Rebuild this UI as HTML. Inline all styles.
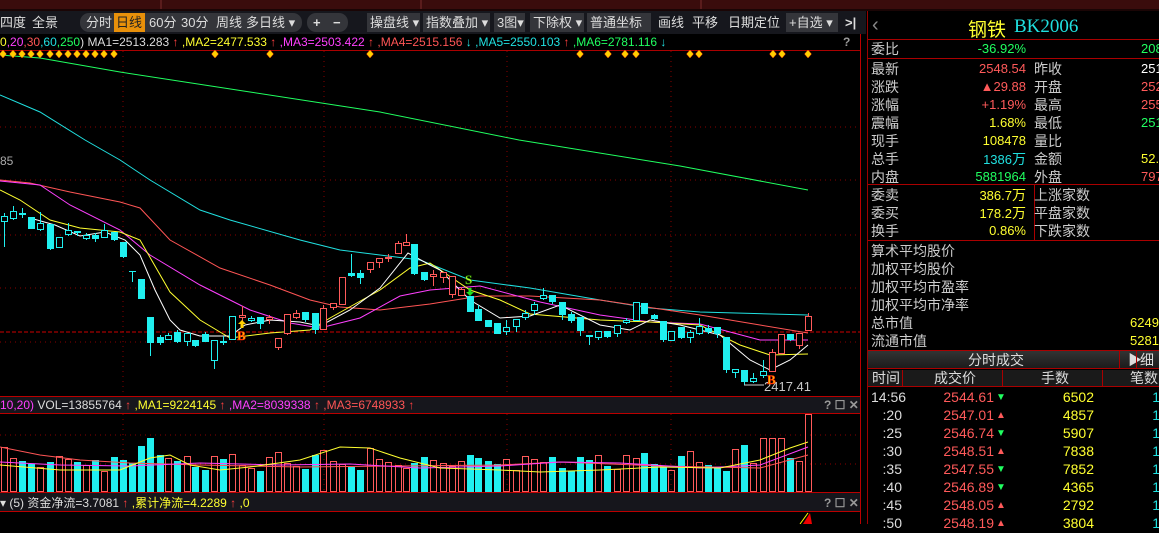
<!DOCTYPE html>
<html><head><meta charset="utf-8">
<style>
*{margin:0;padding:0;box-sizing:border-box}
body{width:1159px;height:524px;background:#000;overflow:hidden;position:relative;font-family:"Liberation Sans","Noto Sans CJK SC",sans-serif;color:#ccc}
.a{position:absolute;white-space:nowrap}
#tb{position:absolute;left:0;top:11px;width:866px;height:23px;background:#16171d;font-size:13px;color:#ddd}
.pill{position:absolute;top:2px;height:19px;background:#34353a;border-radius:9px}
.btn{position:absolute;top:2px;height:19px;background:#34353a;line-height:19px;padding-left:3px;font-size:13px;color:#ddd}
.t{position:absolute;top:2px;line-height:19px;font-size:13px;color:#ddd}
#rp{position:absolute;left:867px;top:11px;width:292px;height:513px;background:#000;border-left:1px solid #900}
.r{position:absolute;font-size:14px;line-height:18px}
.v{position:absolute;font-size:13px;line-height:18px;text-align:right}
</style></head><body>
<div class="a" style="left:0;top:0;width:1159px;height:10px;background:#3a0c0c"></div>
<div class="a" style="left:0;top:9px;width:1159px;height:2px;background:#1a0505"></div>
<div class="a" style="left:160px;top:0;width:2px;height:9px;background:#5a1c1c"></div>
<div class="a" style="left:420px;top:0;width:2px;height:9px;background:#5a1c1c"></div>
<div class="a" style="left:700px;top:0;width:2px;height:9px;background:#5a1c1c"></div>

<div id="tb">
<span class="t" style="left:0">四度</span><span class="t" style="left:32px">全景</span>
<div class="pill" style="left:80px;width:222px"></div>
<span class="t" style="left:86px">分时</span>
<span class="t" style="left:114px;top:2px;height:19px;width:31px;background:#e8900a;color:#222;padding-left:2px">日线</span>
<span class="t" style="left:149px">60分</span><span class="t" style="left:181px">30分</span><span class="t" style="left:216px">周线</span><span class="t" style="left:246px">多日线 ▾</span>
<div class="pill" style="left:307px;width:41px"></div>
<span class="t" style="left:313px;font-weight:bold">+</span><span class="t" style="left:333px;font-weight:bold">−</span>
<span class="btn" style="left:367px;width:53px">操盘线 ▾</span>
<span class="btn" style="left:423px;width:67px">指数叠加 ▾</span>
<span class="btn" style="left:494px;width:31px">3图▾</span>
<span class="btn" style="left:530px;width:54px">下除权 ▾</span>
<span class="btn" style="left:587px;width:64px">普通坐标 ▾</span>
<span class="t" style="left:658px">画线</span><span class="t" style="left:692px">平移</span><span class="t" style="left:728px">日期定位</span>
<span class="btn" style="left:786px;width:52px">+自选 ▾</span>
<span class="t" style="left:845px;font-weight:bold">&gt;|</span>
</div>

<svg class="a" style="left:0;top:0" width="866" height="524" id="sv">
<rect x="0" y="34" width="860" height="16" fill="#000"/>
<line x1="0" y1="50.5" x2="860" y2="50.5" stroke="#a00" />
<line x1="860.5" y1="34" x2="860.5" y2="524" stroke="#b00"/>
<g stroke="#8a0000" stroke-dasharray="1,4">
<line x1="0" y1="127" x2="860" y2="127"/><line x1="0" y1="180" x2="860" y2="180"/><line x1="0" y1="235" x2="860" y2="235"/><line x1="0" y1="288" x2="860" y2="288"/><line x1="0" y1="342" x2="860" y2="342"/>
<line x1="123" y1="51" x2="123" y2="396"/><line x1="324" y1="51" x2="324" y2="396"/><line x1="507" y1="51" x2="507" y2="396"/><line x1="671" y1="51" x2="671" y2="396"/>
<line x1="0" y1="435" x2="860" y2="435"/><line x1="0" y1="464" x2="860" y2="464"/>
<line x1="123" y1="414" x2="123" y2="492"/><line x1="324" y1="414" x2="324" y2="492"/><line x1="507" y1="414" x2="507" y2="492"/><line x1="671" y1="414" x2="671" y2="492"/>
</g>
<line x1="0" y1="332" x2="860" y2="332" stroke="#c00" stroke-dasharray="4,2"/>
<text x="0" y="165" fill="#aaa" font-size="12" font-family="Liberation Sans">85</text>
<g fill="none" stroke-width="1">
<polyline stroke="#20ff60" points="0,55 40,58 120,72 250,92 380,112 519,140 680,166 808,190"/>
<polyline stroke="#20e0e0" points="0,95 40,112 85,140 120,160 150,180 200,210 230,220 300,240 340,250 420,260 470,280 530,288 600,300 650,308 700,312 808,315"/>
<polyline stroke="#ff5555" points="0,180 30,183 70,192 120,202 140,208 170,240 220,268 270,285 310,300 340,307 380,310 430,304 480,296 530,296 600,300 640,306 700,315 760,325 808,333"/>
<polyline stroke="#ff40ff" points="0,181 40,185 70,205 120,230 150,255 200,285 250,310 290,323 320,328 360,318 400,296 430,290 480,286 540,302 600,315 650,322 700,324 730,332 760,340 808,340"/>
<polyline stroke="#ffff30" points="0,190 20,200 50,220 80,228 120,232 140,240 170,292 200,320 230,338 270,333 310,330 330,318 380,290 410,268 430,263 470,290 500,300 530,314 600,320 650,322 700,325 740,345 770,355 808,354"/>
<polyline stroke="#ffffff" points="30,218 55,225 80,236 105,232 125,240 140,255 155,290 170,320 180,330 200,336 230,336 245,325 270,320 300,322 320,326 350,310 380,288 408,253 430,265 440,270 470,300 500,318 530,316 560,305 600,325 630,330 650,320 680,325 720,335 750,360 770,370 790,360 808,345"/>
</g>
<g id="cd"></g>
<g id="vb"></g>
<polyline fill="none" stroke="#ff5555" points="0,447 40,455 80,460 130,463 200,465 300,467 400,466 500,465 560,462 660,466 760,468 808,455"/>
<polyline fill="none" stroke="#ff40ff" points="0,462 60,465 130,466 200,463 280,465 350,464 420,468 500,466 560,462 620,463 700,468 760,465 800,450 808,447"/>
<polyline fill="none" stroke="#ffff30" points="0,465 60,470 120,470 150,458 170,455 190,465 220,470 250,467 300,460 340,447 370,448 400,458 440,468 500,470 540,472 600,470 660,467 720,468 760,460 790,448 808,442"/>
<line x1="744" y1="385" x2="764" y2="385" stroke="#ccc"/>
<text x="764" y="391" fill="#c8c8c8" font-size="13" font-family="Liberation Sans">2417.41</text>
<text x="237" y="340" fill="#ffb000" stroke="#ff2000" stroke-width="0.6" font-size="13" font-weight="bold" font-family="Liberation Serif">B</text>
<text x="767" y="384" fill="#ffb000" stroke="#ff2000" stroke-width="0.6" font-size="13" font-weight="bold" font-family="Liberation Serif">B</text>
<text x="465" y="284" fill="#c0ff30" stroke="#208000" stroke-width="0.5" font-size="13" font-weight="bold" font-family="Liberation Serif">S</text>
<path d="M242 320 l-4 4 h2.5 v4 h3 v-4 h2.5z" fill="#ffd000"/>
<path d="M470 296 l-4 -4 h2.5 v-4 h3 v4 h2.5z" fill="#20e020"/>
<g id="dm" fill="#ffd000" stroke="#ff4000" stroke-width="0.5"></g>
<rect x="0" y="397" width="860" height="16" fill="#16161c"/>
<line x1="0" y1="396.5" x2="860" y2="396.5" stroke="#b00"/>
<line x1="0" y1="413.5" x2="860" y2="413.5" stroke="#b00"/>
<rect x="0" y="493" width="860" height="18" fill="#16161c"/>
<line x1="0" y1="492.5" x2="860" y2="492.5" stroke="#b00"/>
<line x1="0" y1="511.5" x2="860" y2="511.5" stroke="#b00"/>
<polygon points="803,524 810,513 812,524" fill="#e00"/><line x1="800" y1="524" x2="808" y2="513" stroke="#ff0"/>
<g font-family="Liberation Sans" font-size="12">
<text x="0" y="46"><tspan fill="#ffff30">0</tspan><tspan fill="#ff40ff">,20</tspan><tspan fill="#ff5555">,30</tspan><tspan fill="#20e0e0">,60</tspan><tspan fill="#20ff60">,250</tspan><tspan fill="#ddd">)  MA1=2513.283 </tspan><tspan fill="#ff4040">↑ </tspan><tspan fill="#ffff30">,MA2=2477.533 </tspan><tspan fill="#ff4040">↑ </tspan><tspan fill="#ff40ff">,MA3=2503.422 </tspan><tspan fill="#ff4040">↑ </tspan><tspan fill="#ff5555">,MA4=2515.156 </tspan><tspan fill="#20e0e0">↓ </tspan><tspan fill="#20e0e0">,MA5=2550.103 </tspan><tspan fill="#ff4040">↑ </tspan><tspan fill="#20ff60">,MA6=2781.116 </tspan><tspan fill="#20e0e0">↓</tspan></text>
<text x="0" y="409"><tspan fill="#ff40ff">10,20)</tspan><tspan fill="#ddd">  VOL=13855764 </tspan><tspan fill="#ff4040">↑ </tspan><tspan fill="#ffff30">,MA1=9224145 </tspan><tspan fill="#ff4040">↑ </tspan><tspan fill="#ff40ff">,MA2=8039338 </tspan><tspan fill="#ff4040">↑ </tspan><tspan fill="#ff5555">,MA3=6748933 </tspan><tspan fill="#ff4040">↑</tspan></text>
<text x="0" y="507"><tspan fill="#ddd">▾ (5) 资金净流=3.7081 </tspan><tspan fill="#ff4040">↑ </tspan><tspan fill="#ffff30">,累计净流=4.2289 </tspan><tspan fill="#ff4040">↑ </tspan><tspan fill="#ffff30">,0</tspan></text>
<text x="843" y="46" fill="#999" font-weight="bold">?</text>
<text x="824" y="409" fill="#999" font-weight="bold">? ☐ ✕</text>
<text x="824" y="507" fill="#999" font-weight="bold">? ☐ ✕</text>
</g>
</svg>

<div id="rp">
<div class="a" style="left:0;top:0;width:292px;height:29px;border-bottom:1px solid #a00"></div>
<span class="a" style="left:4px;top:3px;font-size:20px;color:#888">‹</span>
<span class="a" style="left:100px;top:4px;font-size:19px;color:#ffff30">钢铁</span>
<span class="a" style="left:146px;top:5px;font-size:19px;color:#20e0e0;font-family:'Liberation Serif',serif">BK2006</span>
<div class="a" style="left:0;top:47px;width:292px;border-top:1px solid #a00"></div>
<div class="a" style="left:0;top:173px;width:292px;border-top:1px solid #a00"></div>
<div class="a" style="left:0;top:229px;width:292px;border-top:1px solid #a00"></div>
<div class="a" style="left:166px;top:173px;height:56px;border-left:1px solid #a00"></div>
<div id="rows"></div>
<div class="a" style="left:0;top:339px;width:292px;height:19px;background:linear-gradient(#333,#1c1c1c);border-top:1px solid #a00;border-bottom:1px solid #a00;font-size:14px;color:#ddd;line-height:18px"><span class="a" style="left:100px">分时成交</span><span class="a" style="left:251px;top:0;width:1px;height:18px;background:#a00"></span><span class="a" style="left:260px">▶</span><span class="a" style="left:268px;top:0;width:1px;height:18px;background:#a00"></span><span class="a" style="left:272px">细</span></div>
<div class="a" style="left:0;top:359px;width:292px;height:17px;background:#1a1a1a;border-bottom:1px solid #a00;font-size:14px;color:#ddd;line-height:17px"><span class="a" style="left:4px">时间</span><span class="a" style="left:34px;height:17px;border-left:1px solid #a00"></span><span class="a" style="left:66px">成交价</span><span class="a" style="left:134px;height:17px;border-left:1px solid #a00"></span><span class="a" style="left:173px">手数</span><span class="a" style="left:234px;height:17px;border-left:1px solid #a00"></span><span class="a" style="left:262px">笔数</span></div>
<div id="ticks"></div>
</div>

<script>
var C=[[4,216,221,213,247,'h'],[13,211,218,206,220,'h'],[22,213,215,208,218,'c'],[31,217,229,217,229,'c'],[40,223,229,212,231,'h'],[50,224,249,224,250,'c'],[59,237,247,237,247,'h'],[68,230,234,223,236,'h'],[77,231,233,231,236,'c'],[86,235,238,233,240,'h'],[95,235,239,233,242,'c'],[104,230,237,224,238,'h'],[114,232,240,232,241,'c'],[123,242,257,242,258,'c'],[132,271,272,271,282,'c'],[141,279,299,279,299,'c'],[150,317,343,317,356,'c'],[160,337,343,335,345,'c'],[168,335,339,333,340,'h'],[177,332,342,330,343,'c'],[187,333,341,333,346,'h'],[195,340,346,340,347,'c'],[205,334,342,332,342,'c'],[214,340,360,340,369,'h'],[223,341,343,336,345,'c'],[232,316,339,316,339,'h'],[242,315,317,306,321,'r'],[251,318,320,316,322,'h'],[260,317,324,317,329,'c'],[269,317,319,315,324,'r'],[278,338,347,338,350,'r'],[287,314,333,314,335,'r'],[296,313,317,310,319,'r'],[305,312,320,312,322,'c'],[315,313,330,313,334,'c'],[323,308,329,305,329,'r'],[333,303,307,303,310,'r'],[342,277,304,277,304,'r'],[351,273,276,254,277,'c'],[360,273,278,270,284,'c'],[370,262,269,262,273,'r'],[379,258,262,258,268,'r'],[388,257,258,254,262,'r'],[398,243,253,241,253,'r'],[406,242,245,234,245,'r'],[414,244,274,244,275,'c'],[424,272,280,272,281,'c'],[433,274,276,270,286,'r'],[443,272,277,272,283,'r'],[452,276,294,276,298,'r'],[461,289,295,287,296,'r'],[470,296,312,296,312,'c'],[478,309,321,305,321,'c'],[488,320,327,320,327,'c'],[497,323,334,323,334,'c'],[506,327,331,320,335,'h'],[516,319,326,319,332,'h'],[525,313,317,310,320,'h'],[534,304,310,302,315,'h'],[543,295,298,288,300,'h'],[552,295,302,295,304,'c'],[562,302,315,302,320,'c'],[571,314,321,312,323,'c'],[580,317,331,317,336,'c'],[589,335,337,335,345,'c'],[598,331,337,331,340,'h'],[607,331,337,331,338,'c'],[617,325,333,325,337,'h'],[626,320,322,318,324,'h'],[636,302,320,302,320,'h'],[644,303,314,303,314,'c'],[654,315,319,314,320,'c'],[663,321,340,321,342,'c'],[671,331,340,331,341,'h'],[681,327,338,327,339,'c'],[690,332,337,330,343,'h'],[699,326,333,318,335,'h'],[708,328,332,325,334,'c'],[717,327,334,327,338,'c'],[726,337,370,337,373,'c'],[735,369,372,369,378,'h'],[744,370,382,370,385,'c'],[753,378,381,373,383,'h'],[763,371,375,360,378,'h'],[772,352,371,349,371,'r'],[781,334,353,334,353,'r'],[790,334,340,334,341,'c'],[799,333,345,333,349,'r'],[808,316,330,313,330,'r']];
var V={141:446,150:438,348:428,412:445,808:414,763:438,772:438,781:438,744:445,736:446};
var s='',vb='';
C.forEach(function(c,i){var x=c[0],t=c[5],col=t=='r'?'#ff5a5a':'#20f0f0';
s+='<line x1="'+(x+.5)+'" y1="'+c[3]+'" x2="'+(x+.5)+'" y2="'+c[4]+'" stroke="'+col+'"/>';
var h=Math.max(c[2]-c[1],1);
if(t=='c')s+='<rect x="'+(x-3)+'" y="'+c[1]+'" width="7" height="'+h+'" fill="'+col+'"/>';
else s+='<rect x="'+(x-2.5)+'" y="'+(c[1]+.5)+'" width="6" height="'+h+'" fill="#000" stroke="'+col+'"/>';
var top=V[x]||(455+((i*37)%17)+(i%5==0?-8:0));
if(t=='c')vb+='<rect x="'+(x-3)+'" y="'+top+'" width="7" height="'+(492-top)+'" fill="#20f0f0"/>';
else vb+='<rect x="'+(x-2.5)+'" y="'+(top+.5)+'" width="6" height="'+(491-top)+'" fill="none" stroke="#ff5a5a"/>';
});
document.getElementById('cd').innerHTML=s;document.getElementById('vb').innerHTML=vb;
var d='';[3,13,22,31,40,50,59,68,77,86,95,104,114,215,270,370,580,608,625,636,690,699,773,782,808].forEach(function(x){d+='<path d="M'+x+' 50 l3.5 4 -3.5 4 -3.5 -4z"/>'});
document.getElementById('dm').innerHTML=d;
var R=[['委比',29,'-36.92%','#20ff60','','','208','#20ff60'],['最新',49,'2548.54','#ff5a5a','昨收','','251','#fff'],['涨跌',67,'▲29.88','#ff5a5a','开盘','','252','#ff5a5a'],['涨幅',85,'+1.19%','#ff5a5a','最高','','255','#ff5a5a'],['震幅',103,'1.68%','#ffff30','最低','','251','#20ff60'],['现手',121,'108478 ','#ffff30','量比','','',''],['总手',139,'1386<span style="font-size:14px">万</span>','#20e0e0','金额','','52.','#ffff30'],['内盘',157,'5881964','#20ff60','外盘','','797','#ff5a5a'],['委卖',175,'386.7<span style="font-size:14px">万</span>','#ffff30','上涨家数','','',''],['委买',193,'178.2<span style="font-size:14px">万</span>','#ffff30','平盘家数','','',''],['换手',211,'0.86%','#ffff30','下跌家数','','',''],['算术平均股价',231,'','','','','',''],['加权平均股价',249,'','','','','',''],['加权平均市盈率',267,'','','','','',''],['加权平均市净率',285,'','','','','',''],['总市值',303,'','','','','6249.','#ffff30'],['流通市值',321,'','','','','5281.','#ffff30']];
var h='';R.forEach(function(r){h+='<span class="r" style="left:3px;top:'+r[1]+'px;color:#ccc">'+r[0]+'</span>';
if(r[2])h+='<span class="v" style="left:60px;width:98px;top:'+r[1]+'px;color:'+r[3]+'">'+r[2]+'</span>';
if(r[4])h+='<span class="r" style="left:166px;top:'+r[1]+'px;color:#ccc">'+r[4]+'</span>';
if(r[6])h+='<span class="v" style="left:'+(r[0]=='总市值'||r[0]=='流通市值'?262:273)+'px;top:'+r[1]+'px;color:'+r[7]+'">'+r[6]+'</span>';});
document.getElementById('rows').innerHTML=h;
var T=[['14:56','2544.61',0,'6502'],[':20','2547.01',1,'4857'],[':25','2546.74',0,'5907'],[':30','2548.51',1,'7838'],[':35','2547.55',0,'7852'],[':40','2546.89',0,'4365'],[':45','2548.05',1,'2792'],[':50','2548.19',1,'3804']];
var k='';T.forEach(function(t,i){var y=377+i*18;
if(i)k+='<span class="v" style="left:0;width:34px;top:'+y+'px;color:#ddd;font-size:14px">'+t[0]+'</span>';
else k+='<span class="a" style="left:3px;top:'+y+'px;line-height:18px;color:#ddd;font-size:14px">'+t[0]+'</span>';
k+='<span class="v" style="left:60px;width:66px;top:'+y+'px;color:#ff5a5a;font-size:14px">'+t[1]+'</span>';
k+='<span class="a" style="left:128px;top:'+(y+1)+'px;font-size:10px;line-height:18px;color:'+(t[2]?'#ff5a5a':'#20ff60')+'">'+(t[2]?'▲':'▼')+'</span>';
k+='<span class="v" style="left:170px;width:56px;top:'+y+'px;color:#ffff30;font-size:14px">'+t[3]+'</span>';
k+='<span class="v" style="left:280px;width:12px;top:'+y+'px;color:#20e0e0;font-size:14px">1</span>';});
document.getElementById('ticks').innerHTML=k;
</script>
</body></html>
